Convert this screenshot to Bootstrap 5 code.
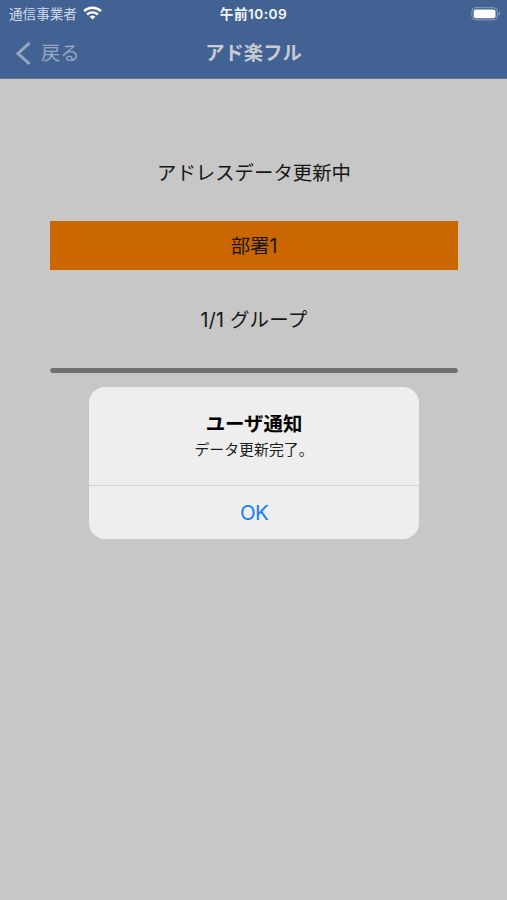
<!DOCTYPE html>
<html lang="ja">
<head>
<meta charset="utf-8">
<meta name="viewport" content="width=device-width, initial-scale=1">
<title>アド楽フル</title>
<link href="https://cdn.jsdelivr.net/npm/bootstrap@5.3.0/dist/css/bootstrap.min.css" rel="stylesheet">
<style>
  body { font-family: Inter, "Noto Sans CJK JP", sans-serif; background: #c7c7c7; color: #161616; height: 900px; overflow: hidden; }
  .app-top { background: #416293; height: 79px; border-bottom: 1px solid #5f7799; }
  .status-line { height: 28px; font-size: 13.6px; line-height: 28px; color: #f4f7fb; }
  .carrier { color: #d0dbea; padding-left: 9px; }
  .wifi { margin: -2px 0 0 6px; }
  .clock { font-weight: 600; letter-spacing: .5px; }
  .title-line { height: 50px; font-size: 19.3px; }
  .back-link, .back-link:hover { color: #98a7c0; padding-left: 15px; }
  .back-link svg { margin-right: 9px; }
  .screen-title { color: #c8cbd1; font-weight: 600; font-size: 19.3px; line-height: 51px; }
  .update-area { padding: 69px 49px 0 50px; font-size: 19.4px; }
  .text-line { height: 49px; line-height: 51px; }
  .group-name { background: #cb6700; margin: 24px 0; height: 49px; line-height: 51px; }
  .group-count { line-height: 52px; letter-spacing: .3px; }
  .progress-line { height: 5px; margin-top: 25px; border-radius: 3px; background: #c7c7c7; }
  .progress-line .progress-bar { background: #6f716f; border-radius: 3px; }
  .notice { padding-top: 387px; padding-left: 89px; }
  .notice-box { width: 330px; height: 152px; border: 0; border-radius: 16px; background: #eeeeee; color: #000; }
  .notice-body { height: 98px; padding-top: 25px; }
  .notice-title { font-size: 19.4px; line-height: 25px; font-weight: 700; }
  .notice-text { font-size: 14.9px; line-height: 20px; margin-top: 3px; color: #1c1c1c; }
  .notice-ok, .notice-ok:hover { height: 54px; border: 0; border-top: 1px solid #d3d3d2; border-radius: 0; color: #147efb; font-size: 20.5px; letter-spacing: -.6px; line-height: 54px; padding: 0; }
</style>
<script src="https://cdn.jsdelivr.net/npm/bootstrap@5.3.0/dist/js/bootstrap.bundle.min.js"></script>
</head>
<body>
<header class="app-top">
  <div class="row g-0 status-line">
    <div class="col-4 carrier d-flex align-items-center">
      <span>通信事業者</span>
      <svg class="wifi flex-shrink-0" width="19" height="14" viewBox="0 0 19 14" fill="none" stroke="#fff" stroke-width="2.4">
        <path d="M1 5.1C5.9.6 13.1.6 18 5.1"/>
        <path d="M4.1 8.5c3-2.8 7.8-2.8 10.8 0"/>
        <path d="M9.5 13.5 6.6 10.6c1.6-1.5 4.2-1.5 5.8 0z" fill="#fff" stroke="none"/>
      </svg>
    </div>
    <div class="col-4 text-center clock">午前10:09</div>
    <div class="col-4 d-flex justify-content-end align-items-center pe-1">
      <svg width="32" height="14" viewBox="0 0 32 14">
        <rect x=".9" y=".7" width="25.4" height="12.2" rx="3.8" fill="none" stroke="#8ba0c2"/>
        <rect x="2.7" y="2.4" width="21.8" height="8.8" rx="2" fill="#fff"/>
        <path d="M27.7 4.6Q30.5 6.800 27.700 9z" fill="#8ba0c2"/>
      </svg>
    </div>
  </div>
  <nav class="row g-0 title-line">
    <a class="col-4 back-link d-flex align-items-center text-decoration-none" href="#">
      <svg width="17" height="24" viewBox="0 0 17 24" fill="none" stroke="currentColor" stroke-width="3"><path d="M14.500 1 3 11.500 14.500 22"/></svg>
      <span>戻る</span>
    </a>
    <h1 class="col-4 screen-title text-center m-0">アド楽フル</h1>
  </nav>
</header>
<main class="update-area text-center">
  <div class="text-line">アドレスデータ更新中</div>
  <div class="group-name">部署1</div>
  <div class="text-line group-count">1/1 グループ</div>
  <div class="progress progress-line"><div class="progress-bar w-100" role="progressbar" aria-valuenow="100" aria-valuemin="0" aria-valuemax="100"></div></div>
</main>
<div class="notice position-absolute top-0 start-0" role="dialog" aria-modal="true" aria-labelledby="notice-title">
  <div class="notice-box card overflow-hidden text-center">
    <div class="notice-body">
      <h2 class="notice-title m-0" id="notice-title">ユーザ通知</h2>
      <p class="notice-text mb-0">データ更新完了。</p>
    </div>
    <button class="btn notice-ok w-100" type="button">OK</button>
  </div>
</div>
</body>
</html>
